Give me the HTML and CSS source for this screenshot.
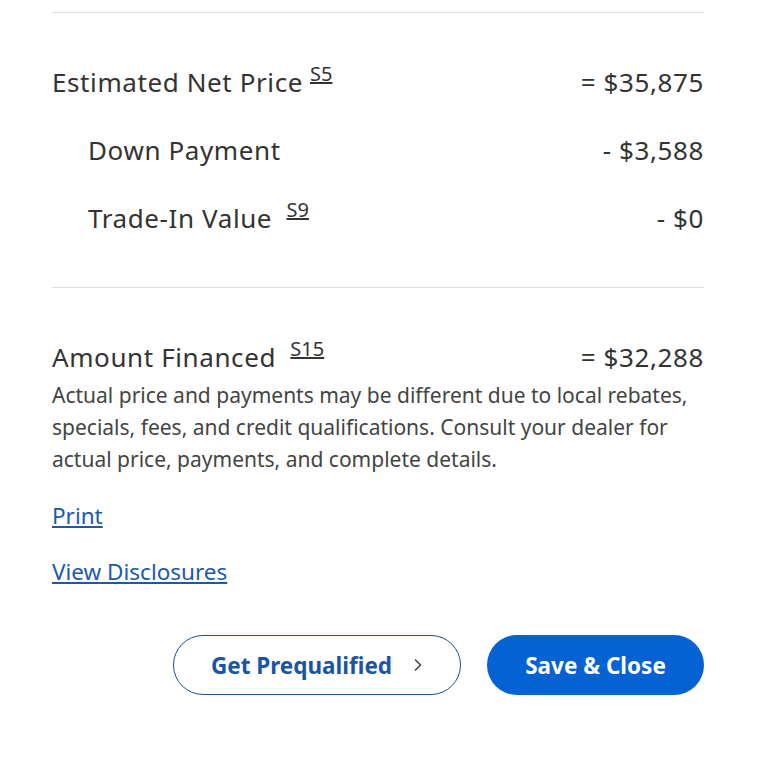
FILE: index.html
```html
<!DOCTYPE html>
<html lang="en">
<head>
  <meta charset="UTF-8">
  <title>Payment Summary</title>
  <link rel="stylesheet" href="styles.css">
</head>
<body>

<div class="summary">
  <div class="divider"></div>

  <div class="row first">
    <span class="label">Estimated Net Price<a class="ref tight" href="#">S5</a></span>
    <span class="value">= $35,875</span>
  </div>
  <div class="row sub">
    <span class="label">Down Payment</span>
    <span class="value">- $3,588</span>
  </div>
  <div class="row sub">
    <span class="label">Trade-In Value <a class="ref" href="#">S9</a></span>
    <span class="value">- $0</span>
  </div>

  <div class="divider lower"></div>

  <div class="row total">
    <span class="label">Amount Financed <a class="ref" href="#">S15</a></span>
    <span class="value">= $32,288</span>
  </div>
  <p class="note">Actual price and payments may be different due to local rebates, specials, fees, and credit qualifications. Consult your dealer for actual price, payments, and complete details.</p>

  <a class="link print" href="#">Print</a>
  <a class="link" href="#">View Disclosures</a>

  <div class="actions">
    <button class="btn outline">Get Prequalified
      <svg width="10" height="14" viewBox="0 0 10 14"><path d="M2.5 2 L7.5 7 L2.5 12" fill="none" stroke="#444" stroke-width="1.6" stroke-linecap="round" stroke-linejoin="round"/></svg>
    </button>
    <button class="btn primary">Save &amp; Close</button>
  </div>
</div>

</body>
</html>
```

FILE: styles.css
```css
body {
  margin: 0;
  font-family: "Noto Sans", Arial, sans-serif;
  color: #333;
  background: #fff;
}
.summary {
  width: 652px;
  margin-left: 52px;
}
.divider {
  height: 1px;
  background: #ddd;
  margin-top: 12px;
}
.divider.lower {
  margin-top: 35px;
}
.row {
  display: flex;
  justify-content: space-between;
  align-items: baseline;
  font-size: 26px;
  letter-spacing: 0.6px;
  line-height: 68px;
}
.row.first {
  margin-top: 35px;
}
.row.sub .label {
  padding-left: 36px;
}
.row.total {
  margin-top: 49px;
  line-height: 40px;
}
.ref {
  font-size: 20px;
  letter-spacing: 0;
  color: #333;
  vertical-align: 11px;
  line-height: 1;
  margin-left: 7px;
}
.note {
  margin: 2px 0 0;
  font-size: 21px;
  line-height: 32px;
  color: #444;
}
.link {
  display: block;
  width: max-content;
  font-size: 22.5px;
  line-height: 32px;
  color: #1c5aa8;
  margin-top: 24px;
}
.link.print {
  margin-top: 25px;
}
.actions {
  display: flex;
  justify-content: flex-end;
  gap: 26px;
  margin-top: 47px;
}
.btn {
  height: 60px;
  border-radius: 30px;
  font-family: "Noto Sans", Arial, sans-serif;
  font-size: 22.5px;
  font-weight: bold;
  cursor: pointer;
  display: flex;
  align-items: center;
  justify-content: center;
}
.btn.outline {
  width: 288px;
  background: #fff;
  color: #1a55a5;
  border: 1px solid #1f4f8f;
  gap: 21px;
  padding-left: 6px;
}
.btn.primary {
  width: 217px;
  background: #0562d2;
  color: #fff;
  border: none;
}
```
